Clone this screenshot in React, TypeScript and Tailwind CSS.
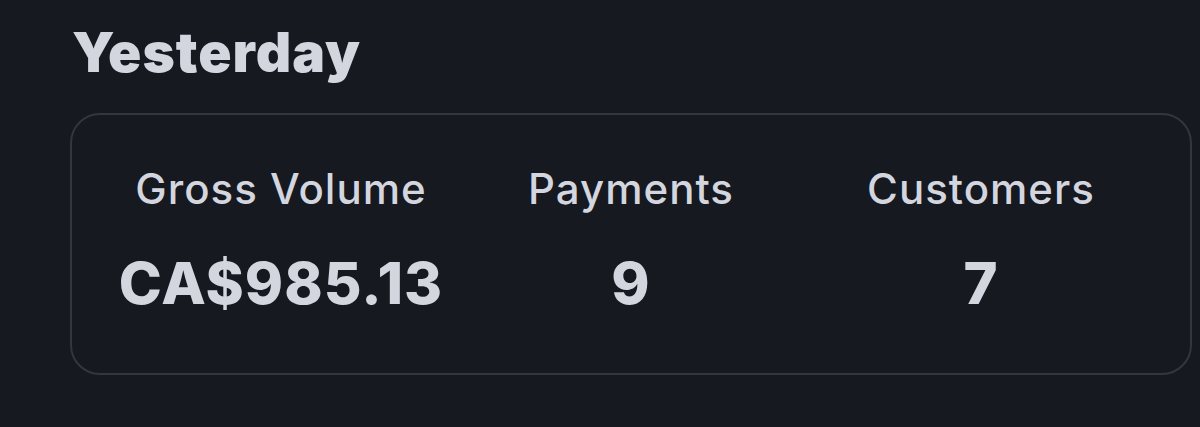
import React from "react";

const stats = [
  { label: "Gross Volume", value: "CA$985.13" },
  { label: "Payments", value: "9" },
  { label: "Customers", value: "7" },
];

export default function App() {
  return (
    <div
      className="min-h-screen w-full bg-[#161920] text-[#d3d5df] px-[70px] pt-[19px]"
      style={{ fontFamily: "Inter, 'Noto Sans', sans-serif" }}
    >
      <h1 className="text-[55px] leading-[66px] font-black tracking-[1px] pl-[2px]">
        Yesterday
      </h1>
      <div className="mt-[28px] w-[1122px] h-[262px] rounded-[30px] border-2 border-[#33363f] px-[34px] pt-[49px]">
        <div className="grid grid-cols-3">
          {stats.map((s) => (
            <div key={s.label} className="flex flex-col items-center">
              <div className="text-[42px] leading-[50px] font-medium tracking-[1px]">
                {s.label}
              </div>
              <div className="mt-[35px] text-[58px] leading-[69px] font-extrabold tracking-[1px]">
                {s.value}
              </div>
            </div>
          ))}
        </div>
      </div>
    </div>
  );
}
